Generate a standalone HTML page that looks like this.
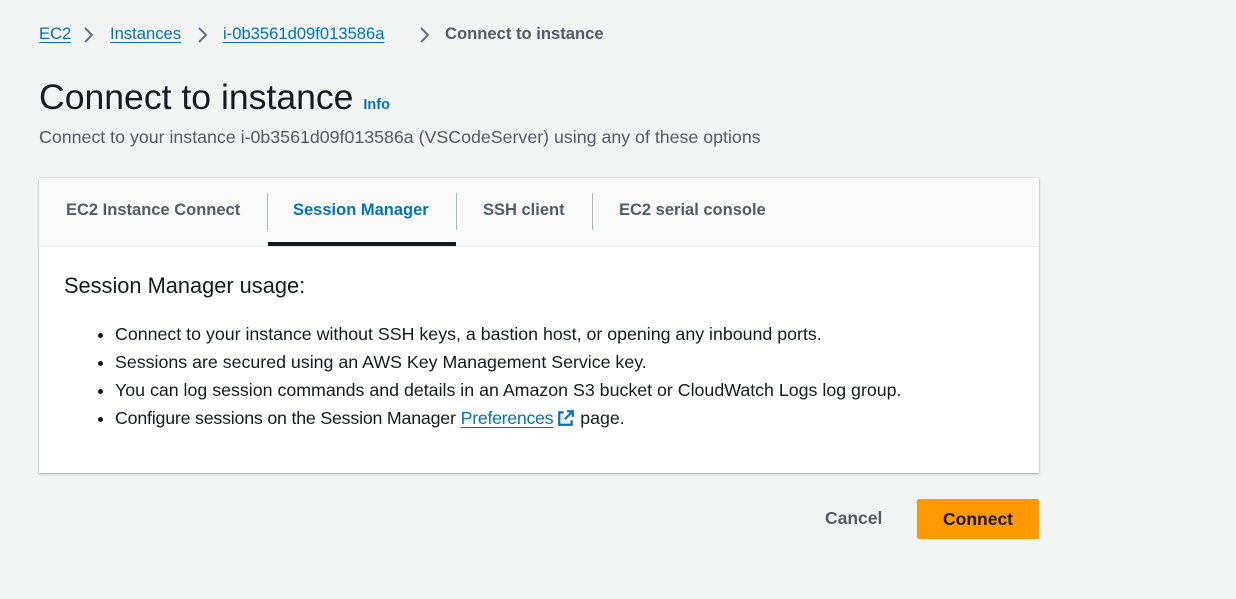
<!DOCTYPE html>
<html><head><style>
body{margin:0;width:1236px;height:599px;background:#f2f3f3;font-family:"Liberation Sans",sans-serif;color:#16191f;position:relative;overflow:hidden}
.a{position:absolute;white-space:nowrap}
.bc{top:24px;font-size:16.6px}
.bl{color:#0073bb;text-decoration:underline;text-underline-offset:3px}
.ch{position:absolute;top:26px}
.card{position:absolute;left:39px;top:178px;width:1000px;height:295px;background:#fff;box-shadow:0 1px 2px rgba(0,28,36,.3),0 0 1px rgba(0,28,36,.2)}
.tabs{height:68px;background:#fafafa;border-bottom:1px solid #eaeded;position:relative}
.tab{position:absolute;top:23px;font-size:16.5px;font-weight:bold;color:#545b64}
.sep{position:absolute;top:15px;width:1px;height:37px;background:#aab7b8}
li{margin-bottom:6px}
</style></head><body>
<div class="a bc bl" style="left:39px">EC2</div>
<svg class="ch" style="left:82px" width="13" height="18" viewBox="0 0 13 18"><path d="M3 2l7 7-7 7" fill="none" stroke="#687078" stroke-width="2"/></svg>
<div class="a bc bl" style="left:110px">Instances</div>
<svg class="ch" style="left:196px" width="13" height="18" viewBox="0 0 13 18"><path d="M3 2l7 7-7 7" fill="none" stroke="#687078" stroke-width="2"/></svg>
<div class="a bc bl" style="left:223px">i-0b3561d09f013586a</div>
<svg class="ch" style="left:418px" width="13" height="18" viewBox="0 0 13 18"><path d="M3 2l7 7-7 7" fill="none" stroke="#687078" stroke-width="2"/></svg>
<div class="a bc" style="left:445px;font-weight:bold;color:#545b64">Connect to instance</div>
<div class="a" style="top:77px;left:39px;font-size:35.6px;">Connect to instance <span style="font-size:14.5px;font-weight:bold;color:#0073bb">Info</span></div>
<div class="a" style="top:127px;left:39px;font-size:17.8px;color:#545b64">Connect to your instance i-0b3561d09f013586a (VSCodeServer) using any of these options</div>
<div class="card">
 <div class="tabs">
  <div class="tab" style="left:27px">EC2 Instance Connect</div>
  <div class="sep" style="left:228px"></div>
  <div class="tab" style="left:254px;color:#0073bb">Session Manager</div>
  <div style="position:absolute;left:229px;width:188px;top:64px;height:4px;background:#16191f"></div>
  <div class="sep" style="left:417px"></div>
  <div class="tab" style="left:444px">SSH client</div>
  <div class="sep" style="left:553px"></div>
  <div class="tab" style="left:580px">EC2 serial console</div>
 </div>
 <div class="a" style="left:25px;top:95px;font-size:21.8px">Session Manager usage:</div>
 <ul class="a" style="left:36px;top:145px;margin:0;padding-left:40px;font-size:17.8px;line-height:22px">
  <li>Connect to your instance without SSH keys, a bastion host, or opening any inbound ports.</li>
  <li>Sessions are secured using an AWS Key Management Service key.</li>
  <li>You can log session commands and details in an Amazon S3 bucket or CloudWatch Logs log group.</li>
  <li><span style="letter-spacing:-0.2px">Configure sessions on the Session Manager</span> <span style="color:#0073bb;text-decoration:underline;text-underline-offset:3px;letter-spacing:-0.3px">Preferences</span><svg width="18" height="18" viewBox="0 0 16 16" style="vertical-align:-3px;margin-left:4px"><path d="M9 2h5v5M14 2L7 9M6 3H2v11h11v-4" fill="none" stroke="#0073bb" stroke-width="2"/></svg> page.</li>
 </ul>
</div>
<div class="a" style="left:825px;top:508px;font-size:17.5px;font-weight:bold;color:#545b64">Cancel</div>
<div class="a" style="left:917px;top:499px;width:122px;height:40px;background:#ff9900;border-radius:2px;font-size:17.5px;font-weight:bold;text-align:center;line-height:40px">Connect</div>
</body></html>
